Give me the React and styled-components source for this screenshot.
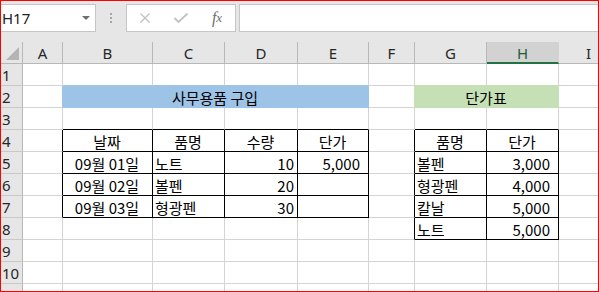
import React from 'react';
import styled, { createGlobalStyle } from 'styled-components';

const GlobalStyle = createGlobalStyle`
  html, body {
    margin: 0;
    padding: 0;
    background: #fff;
  }
  body {
    font-family: "Noto Sans CJK KR", "Noto Sans", sans-serif;
  }
`

const GRID = '#d4d4d4'
const BLACK = '#000'
const HEAD_LINE = '#b8b8b8'

const COLS = [
  { key: 'A', width: 40 },
  { key: 'B', width: 90 },
  { key: 'C', width: 72 },
  { key: 'D', width: 73 },
  { key: 'E', width: 71 },
  { key: 'F', width: 46 },
  { key: 'G', width: 72 },
  { key: 'H', width: 72 },
  { key: 'I', width: 60 },
]
const ROWS = [1, 2, 3, 4, 5, 6, 7, 8, 9, 10, 11]

const CELLS = {
  B2: { text: '사무용품 구입', span: 4, fill: '#9dc3e6', align: 'center' },
  G2: { text: '단가표', span: 2, fill: '#c5e0b4', align: 'center' },
  B4: { text: '날짜', align: 'center' },
  C4: { text: '품명', align: 'center' },
  D4: { text: '수량', align: 'center' },
  E4: { text: '단가', align: 'center' },
  B5: { text: '09월 01일', align: 'center' },
  C5: { text: '노트' },
  D5: { text: '10', align: 'right' },
  E5: { text: '5,000', align: 'right', pad: 8 },
  B6: { text: '09월 02일', align: 'center' },
  C6: { text: '볼펜' },
  D6: { text: '20', align: 'right' },
  B7: { text: '09월 03일', align: 'center' },
  C7: { text: '형광펜' },
  D7: { text: '30', align: 'right' },
  G4: { text: '품명', align: 'center' },
  H4: { text: '단가', align: 'center' },
  G5: { text: '볼펜' },
  H5: { text: '3,000', align: 'right', pad: 8 },
  G6: { text: '형광펜' },
  H6: { text: '4,000', align: 'right', pad: 8 },
  G7: { text: '칼날' },
  H7: { text: '5,000', align: 'right', pad: 8 },
  G8: { text: '노트' },
  H8: { text: '5,000', align: 'right', pad: 8 },
}

const TABLES = [
  { c1: 1, c2: 4, r1: 4, r2: 7 },
  { c1: 6, c2: 7, r1: 4, r2: 8 },
]

// which merged cell covers column index ci on row r
const ownerAt = (ci, r) => {
  if (ci >= COLS.length) return null
  for (let i = ci; i >= 0; i--) {
    const cell = CELLS[COLS[i].key + r]
    if (cell) return i + (cell.span || 1) - 1 >= ci ? cell : null
  }
  return null
}
const inTable = (ci, r) =>
  TABLES.some(t => ci >= t.c1 && ci <= t.c2 && r >= t.r1 && r <= t.r2)

const edgeColor = (a, b) => {
  if (inTable(a.ci, a.r) || inTable(b.ci, b.r)) return BLACK
  const fa = ownerAt(a.ci, a.r)
  const fb = ownerAt(b.ci, b.r)
  if (fa && fa.fill) return fa.fill
  if (fb && fb.fill) return fb.fill
  return GRID
}

const Frame = styled.div`
  width: 599px;
  height: 292px;
  box-sizing: border-box;
  border: 1px solid #ff0000;
  overflow: hidden;
  background: #e6e6e6;
`
const Toolbar = styled.div`
  display: flex;
  align-items: flex-start;
  height: 41px;
  padding-top: 3px;
  box-sizing: border-box;
  background: #e6e6e6;
`
const NameBox = styled.div`
  display: flex;
  align-items: center;
  justify-content: space-between;
  width: 95px;
  height: 28px;
  box-sizing: border-box;
  padding: 0 5px 0 1px;
  background: #fff;
  border: 1px solid #c6c6c6;
  border-left: none;
  font-family: "Noto Sans", sans-serif;
  font-size: 15px;
  color: #222;
`
const Caret = styled.span`
  width: 0;
  height: 0;
  border-left: 4px solid transparent;
  border-right: 4px solid transparent;
  border-top: 4px solid #6e6e6e;
`
const Grip = styled.div`
  display: flex;
  flex-direction: column;
  align-items: center;
  gap: 2px;
  width: 30px;
  padding-top: 9px;
  span {
    width: 2px;
    height: 2px;
    background: #a6a6a6;
  }
`
const FxButtons = styled.div`
  display: flex;
  width: 110px;
  height: 28px;
  box-sizing: border-box;
  background: #fff;
  border: 1px solid #c6c6c6;
`
const FxSlot = styled.div`
  display: flex;
  align-items: center;
  justify-content: center;
  width: 36px;
  font-family: "Liberation Serif", serif;
  font-style: italic;
  font-size: 16px;
  color: #6e6e6e;
  small {
    font-size: 13px;
  }
`
const FormulaInput = styled.div`
  flex: 1;
  height: 28px;
  margin-left: 3px;
  box-sizing: border-box;
  background: #fff;
  border: 1px solid #c6c6c6;
  border-right: none;
`
const Sheet = styled.div`
  display: grid;
  grid-template-columns: 22px ${COLS.map(c => c.width + 'px').join(' ')};
  grid-auto-rows: 22px;
  background: #fff;
`
const Corner = styled.div`
  display: flex;
  align-items: flex-end;
  justify-content: flex-end;
  padding: 0 3px 3px 0;
  box-sizing: border-box;
  background: #e6e6e6;
  border-right: 1px solid ${HEAD_LINE};
  border-bottom: 1px solid ${HEAD_LINE};
`
const ColHead = styled.div`
  display: flex;
  align-items: center;
  justify-content: center;
  box-sizing: border-box;
  font-family: "Noto Sans", sans-serif;
  font-size: 15px;
  color: ${p => (p.$active ? '#1d5c37' : '#262626')};
  background: ${p => (p.$active ? '#d2d2d2' : '#e6e6e6')};
  border-right: 1px solid ${p => (p.$active ? '#d2d2d2' : HEAD_LINE)};
  border-bottom: ${p => (p.$active ? '2px solid #217346' : `1px solid ${HEAD_LINE}`)};
  padding-top: ${p => (p.$active ? '1px' : '0')};
`
const RowHead = styled.div`
  display: flex;
  align-items: center;
  padding-left: 1px;
  box-sizing: border-box;
  font-family: "Noto Sans", sans-serif;
  font-size: 15px;
  color: #262626;
  background: #e6e6e6;
  border-right: 1px solid ${HEAD_LINE};
  border-bottom: 1px solid #c8c8c8;
`
const Cell = styled.div`
  display: flex;
  align-items: center;
  justify-content: ${p =>
    p.$align === 'center' ? 'center' : p.$align === 'right' ? 'flex-end' : 'flex-start'};
  grid-column: span ${p => p.$span};
  box-sizing: border-box;
  padding: 1px ${p => p.$pad}px 0 2px;
  font-size: 15px;
  line-height: 1;
  color: #000;
  white-space: nowrap;
  background: ${p => p.$fill || '#fff'};
  border-right: 1px solid ${p => p.$right};
  border-bottom: 1px solid ${p => p.$bottom};
`

const CrossIcon = () => (
  <svg width="12" height="12" viewBox="0 0 12 12">
    <path d="M1.5 1.5 L10.5 10.5 M10.5 1.5 L1.5 10.5" stroke="#c2c2c2" strokeWidth="1.4" fill="none" />
  </svg>
)
const CheckIcon = () => (
  <svg width="16" height="12" viewBox="0 0 16 12">
    <path d="M1.5 6 L5.5 10 L14.5 1.5" stroke="#c2c2c2" strokeWidth="1.8" fill="none" />
  </svg>
)
const SelectAll = () => (
  <svg width="13" height="13" viewBox="0 0 13 13">
    <polygon points="13,0 13,13 0,13" fill="#b4b4b4" />
  </svg>
)

const App = () => {
  const rows = ROWS.map(r => {
    const out = [<RowHead key={'h' + r}>{r}</RowHead>]
    COLS.forEach((col, ci) => {
      const owner = ownerAt(ci, r)
      const own = CELLS[col.key + r]
      if (owner && !own) return
      const span = own && own.span ? own.span : 1
      const last = ci + span - 1
      const right = edgeColor({ ci: last, r }, { ci: last + 1, r })
      const bottom = edgeColor({ ci, r }, { ci, r: r + 1 })
      out.push(
        <Cell
          key={col.key + r}
          $span={span}
          $align={own && own.align}
          $pad={own && own.pad ? own.pad : 3}
          $fill={own && own.fill}
          $right={right}
          $bottom={bottom}
        >
          {own ? own.text : ''}
        </Cell>
      )
    })
    return out
  })

  return (
    <>
      <GlobalStyle />
      <Frame>
        <Toolbar>
          <NameBox>
            H17
            <Caret />
          </NameBox>
          <Grip>
            <span />
            <span />
            <span />
          </Grip>
          <FxButtons>
            <FxSlot><CrossIcon /></FxSlot>
            <FxSlot><CheckIcon /></FxSlot>
            <FxSlot>f<small>x</small></FxSlot>
          </FxButtons>
          <FormulaInput />
        </Toolbar>
        <Sheet>
          <Corner><SelectAll /></Corner>
          {COLS.map(col => (
            <ColHead key={col.key} $active={col.key === 'H'}>{col.key}</ColHead>
          ))}
          {rows}
        </Sheet>
      </Frame>
    </>
  )
}

export default App
